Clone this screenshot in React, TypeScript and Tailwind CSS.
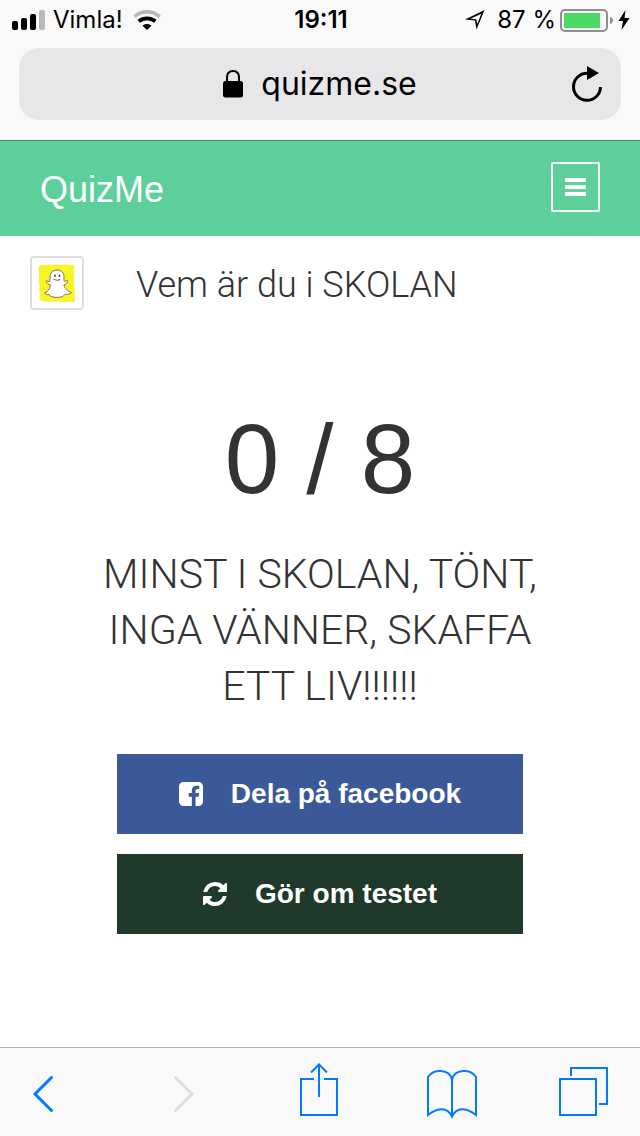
import type { ReactNode } from 'react';

function StatusBar() {
  return (
    <div className="grid h-10 grid-cols-[1fr_auto_1fr] items-center pl-3 pr-2.5 font-['Inter',sans-serif] text-2xl text-black">
      <div className="flex items-center">
        {/* Signal strength */}
        <svg className="mr-2 h-5 w-[33px]" viewBox="0 0 33 20" aria-hidden="true">
          <rect x="0" y="11" width="6" height="9" rx="2" />
          <rect x="9" y="8" width="6" height="12" rx="2" />
          <rect x="18" y="4" width="6" height="16" rx="2" />
          <rect x="27" y="0" width="6" height="20" rx="2" fill="#b9b9b9" />
        </svg>
        <span>Vimla!</span>
        {/* Wifi */}
        <svg className="ml-2.5 h-5 w-7" viewBox="0 0 28 20" fill="none" aria-hidden="true">
          <path d="M1.3 6.6C8.5 0.3 19.5 0.3 26.7 6.6" stroke="#b9b9b9" strokeWidth="3.6" />
          <path d="M5.7 11.3C10.5 7.3 17.5 7.3 22.3 11.3" stroke="#000" strokeWidth="3.8" />
          <path d="M9.5 15.8C12 13.4 16 13.4 18.5 15.8L14 20Z" fill="#000" />
        </svg>
      </div>

      <span className="font-semibold">19:11</span>

      <div className="flex items-center justify-end">
        {/* Location */}
        <svg className="mr-3 h-5 w-5" viewBox="0 0 20 20" aria-hidden="true">
          <path
            d="M0 9.5L19.5 0L11.5 19.5L10 10.5ZM5.5 8.8L11.3 9.3L12.3 14L16.3 3.8Z"
            fill="#000"
            fillRule="evenodd"
          />
        </svg>
        <span className="whitespace-nowrap">87 %</span>
        {/* Battery */}
        <svg className="ml-1 h-6 w-[54px]" viewBox="0 0 54 24" aria-hidden="true">
          <rect x="1" y="2" width="46" height="21" rx="4" fill="none" stroke="#8f8f8f" strokeWidth="2" />
          <rect x="4" y="5" width="36" height="15" fill="#4cd964" />
          <path d="M50 9Q53 10 53 12.5T50 16Z" fill="#8f8f8f" />
        </svg>
        {/* Charging */}
        <svg className="ml-1 h-5 w-3" viewBox="0 0 12 20" aria-hidden="true">
          <path d="M7.5 0L0.5 11H5L3.5 20L11.5 8H6.5Z" />
        </svg>
      </div>
    </div>
  );
}

function AddressBar() {
  return (
    <div className="mx-[19px] mb-5 mt-2 grid h-18 grid-cols-[1fr_auto_1fr] items-center rounded-[20px] bg-[#e7e7e9] text-black">
      <span />
      <button type="button" className="flex items-center gap-[18px] font-['Inter',sans-serif] text-[32px] leading-10">
        <svg className="h-7 w-5" viewBox="0 0 20 28" aria-hidden="true">
          <path d="M4 13V7.500Q4 1 10 1T16 7.500V13" fill="none" stroke="#000" strokeWidth="2" />
          <rect x="0" y="11" width="20" height="16.500" rx="2.500" />
        </svg>
        quizme.se
      </button>
      <button type="button" aria-label="Ladda om" className="mr-[18px] justify-self-end">
        <svg className="h-9 w-8" viewBox="0 0 32 36" aria-hidden="true">
          <path d="M16 7.3A13.5 13.5 0 1 0 29.5 21" fill="none" stroke="#000" strokeWidth="3" />
          <path d="M16 0V14L28 7Z" />
        </svg>
      </button>
    </div>
  );
}

function SiteHeader() {
  return (
    <header className="flex items-center justify-between border-t border-[#41916d] bg-[#5dcf9b] px-10 pb-6 pt-[21px]">
      <a href="#" className="pt-1.5 text-[36px] leading-11 text-white">
        QuizMe
      </a>
      <button
        type="button"
        aria-label="Meny"
        className="flex h-[50px] w-[49px] items-center justify-center rounded-xs border-2 border-white"
      >
        <svg className="h-[18px] w-[21px]" viewBox="0 0 21 18" fill="#fff" aria-hidden="true">
          <rect y="0" width="21" height="4" rx="1" />
          <rect y="7" width="21" height="4" rx="1" />
          <rect y="14" width="21" height="4" rx="1" />
        </svg>
      </button>
    </header>
  );
}

function QuizThumbnail() {
  return (
    <div className="flex size-[54px] shrink-0 items-center justify-center rounded-sm border-2 border-[#ddd] bg-white">
      <svg className="size-10" viewBox="0 0 40 40" aria-hidden="true">
        <path
          d="M2 3L5 2L8 2.5L12 1.5L16 2L20 1.5L25 2L29 1.5L33 2L37 2L37.3 6L36.8 11L37.3 16L37 22L37.7 27L37.5 33L38 39L33 38.5L28 39.2L23 38.5L18 39L12 38.2L7 38.5L2.5 37.2L2.7 32L2.2 27L2.7 22L1.8 17L2 11L1.6 7Z"
          fill="#f8f428"
        />
        <path
          d="M20 7C15.5 7 13 10 13 14C13 17 13.3 18.5 12 18.6C11 18.5 10 17.3 9.3 18C8.8 19.4 11.5 21.5 13.5 22C13 26 10.5 29 7.5 30C8.5 31.5 10 31.6 12 31.6C14 34 17 34.5 20.5 34.3C24 34.5 26.5 33.5 28 31.3C30.5 31.6 33 31 34.5 29.5C31 28.5 27.5 25.5 27 21.8C29 21 31.3 19.5 30.5 17.5C29.5 17 28.5 18.6 27.3 18.3C26.7 17 27 15.5 27 14C27 10 24.5 7 20 7Z"
          fill="#fff"
          stroke="#77776a"
          strokeWidth="1"
        />
        <ellipse cx="18" cy="12.8" rx="0.9" ry="1.3" fill="#444" />
        <ellipse cx="22.5" cy="12.8" rx="0.9" ry="1.3" fill="#444" />
        <path d="M16.5 16.3Q20.5 18.5 23.5 16" fill="none" stroke="#555" strokeWidth="0.9" />
        <path d="M21 17.5Q22 19 23 17Z" fill="#ee6f7c" />
      </svg>
    </div>
  );
}

function FacebookIcon() {
  return (
    <svg className="size-6" viewBox="0 128 1536 1536" fill="currentColor" aria-hidden="true">
      <path d="M1248 128q119 0 203.5 84.5t84.5 203.5v960q0 119-84.5 203.5t-203.5 84.5h-188v-595h199l30-232h-229v-148q0-56 23.5-84t91.5-28l122-1v-207q-63-9-178-9-136 0-217.5 80t-81.5 226v171h-200v232h200v595h-532q-119 0-203.5-84.5t-84.5-203.5v-960q0-119 84.5-203.5t203.5-84.5h960z" />
    </svg>
  );
}

function RefreshIcon() {
  return (
    <svg className="size-6" viewBox="0 128 1536 1536" fill="currentColor" aria-hidden="true">
      <path d="M1511 1056q0 5-1 7-64 268-268 434.5t-478 166.5q-146 0-282.5-55t-243.5-157l-129 129q-19 19-45 19t-45-19-19-45v-448q0-26 19-45t45-19h448q26 0 45 19t19 45-19 45l-137 137q71 66 161 102t187 36q134 0 250-65t186-179q11-17 53-117 8-23 30-23h192q13 0 22.5 9.5t9.5 22.5zm25-800v448q0 26-19 45t-45 19h-448q-26 0-45-19t-19-45 19-45l138-138q-148-137-349-137-134 0-250 65t-186 179q-11 17-53 117-8 23-30 23h-199q-13 0-22.5-9.5t-9.5-22.5v-7q65-268 270-434.5t480-166.5q146 0 284 55.5t245 156.5l130-129q19-19 45-19t45 19 19 45z" />
    </svg>
  );
}

function Result() {
  return (
    <main className="flex-1 bg-white pt-5 text-[#333]">
      <div className="flex items-center gap-[52px] px-[30px]">
        <QuizThumbnail />
        <h1 className="pt-1 font-['Roboto',sans-serif] text-[36px] font-light leading-12">Vem är du i SKOLAN</h1>
      </div>

      <section className="px-[90px] text-center">
        <p className="mt-24 text-[98px] leading-[106px]">0 / 8</p>
        <p className="mt-[34px] font-['Roboto',sans-serif] text-[41px] font-light leading-14">
          MINST I SKOLAN, TÖNT, INGA VÄNNER, SKAFFA ETT LIV!!!!!!
        </p>
      </section>

      <div className="mt-10 flex flex-col gap-5 px-[117px] pb-10 text-[28px] font-bold text-white">
        <button type="button" className="flex h-20 items-center justify-center gap-7 bg-[#3b5998]">
          <FacebookIcon />
          Dela på facebook
        </button>
        <button type="button" className="flex h-20 items-center justify-center gap-7 bg-[#1f3a2a]">
          <RefreshIcon />
          Gör om testet
        </button>
      </div>
    </main>
  );
}

interface ToolbarButtonProps {
  label: string;
  wide?: boolean;
  disabled?: boolean;
  children: ReactNode;
}

function ToolbarButton({ label, wide, disabled, children }: ToolbarButtonProps) {
  return (
    <button
      type="button"
      aria-label={label}
      disabled={disabled}
      className={`flex justify-center ${wide ? 'w-16' : 'w-14'} ${disabled ? 'text-[#dcdcdc]' : 'text-[#007aff]'}`}
    >
      <svg className="size-14" viewBox="0 0 56 56" fill="none" stroke="currentColor" strokeWidth="2" aria-hidden="true">
        {children}
      </svg>
    </button>
  );
}

function Toolbar() {
  return (
    <nav className="flex justify-between border-t border-[#b2b2b2] bg-[#f9f9f9] pb-[17px] pl-[11px] pr-7 pt-[15px]">
      <ToolbarButton label="Bakåt" wide>
        <path d="M36.5 14.5L20 31L36.5 47.5" strokeWidth="3" strokeLinecap="round" />
      </ToolbarButton>
      <ToolbarButton label="Framåt" wide disabled>
        <path d="M20.5 14.5L37 31L20.5 47.5" strokeWidth="3" strokeLinecap="round" />
      </ToolbarButton>
      <ToolbarButton label="Dela">
        <path d="M22 16H9V52H45V16H32" />
        <path d="M27 34V2M19 9.5L27 1.5L35 9.5" />
      </ToolbarButton>
      <ToolbarButton label="Bokmärken">
        <path d="M28 17C26 5.5 9 5.5 4 14V52C12 45.5 23 42.5 28 53.5C33 42.5 44 45.5 52 52V14C47 5.5 30 5.5 28 17Z" />
        <path d="M28 15V54" />
      </ToolbarButton>
      <ToolbarButton label="Flikar">
        <path d="M4 16H40V52H4Z" />
        <path d="M15 13V5H51V41H43" />
      </ToolbarButton>
    </nav>
  );
}

export default function App() {
  return (
    <div className="flex min-h-screen flex-col font-['Liberation_Sans',sans-serif]">
      <div className="bg-[#f9f9f9]">
        <StatusBar />
        <AddressBar />
      </div>
      <SiteHeader />
      <Result />
      <Toolbar />
    </div>
  );
}
